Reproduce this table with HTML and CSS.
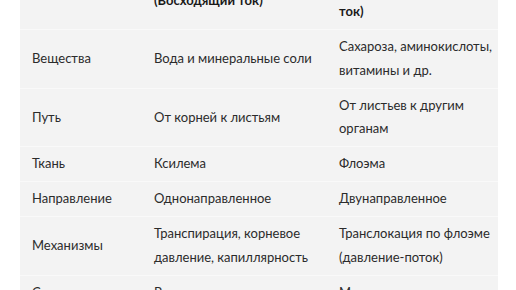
FILE: index.html
```html
<!DOCTYPE html>
<html lang="ru">
<head>
<meta charset="utf-8">
<title>Ксилема и флоэма</title>
<link rel="stylesheet" href="styles.css">
</head>
<body>
<div class="wrap">
  <table class="cmp">
    <colgroup>
      <col class="c1">
      <col class="c2">
      <col class="c3">
    </colgroup>
    <thead>
      <tr>
        <th>Признак</th>
        <th>Ксилемный транспорт<br>(Восходящий ток)</th>
        <th>Флоэмный транспорт<br>(Нисходящий<br>ток)</th>
      </tr>
    </thead>
    <tbody>
      <tr><td>Вещества</td><td>Вода и минеральные соли</td><td>Сахароза, аминокислоты, витамины и др.</td></tr>
      <tr><td>Путь</td><td>От корней к листьям</td><td>От листьев к другим органам</td></tr>
      <tr><td>Ткань</td><td>Ксилема</td><td>Флоэма</td></tr>
      <tr><td>Направление</td><td>Однонаправленное</td><td>Двунаправленное</td></tr>
      <tr><td>Механизмы</td><td>Транспирация, корневое давление, капиллярность</td><td>Транслокация по флоэме (давление-поток)</td></tr>
      <tr><td>Скорость</td><td>Высокая</td><td>Меньше</td></tr>
    </tbody>
  </table>
</div>
</body>
</html>
```
FILE: styles.css
```css
html, body {
  margin: 0;
  padding: 0;
  background: #ffffff;
}
body {
  font-family: Lato, Roboto, "Liberation Sans", sans-serif;
  font-size: 13px;
  color: #2b2b2b;
  overflow: hidden;
}
.wrap {
  padding-left: 20px;
  margin-top: -52px;
}
.cmp {
  width: 478px;
  table-layout: fixed;
  border-collapse: separate;
  border-spacing: 0;
  background: #f3f3f3;
}
.c1 { width: 122px; }
.c2 { width: 185px; }
.c3 { width: 171px; }
.cmp th,
.cmp td {
  text-align: left;
  vertical-align: middle;
  line-height: 23.5px;
  padding: 5.25px 6px 5.25px 12px;
  border-bottom: 1px solid #f9f9f9;
}
.cmp th {
  font-weight: 700;
  color: #1a1a1a;
}
```
